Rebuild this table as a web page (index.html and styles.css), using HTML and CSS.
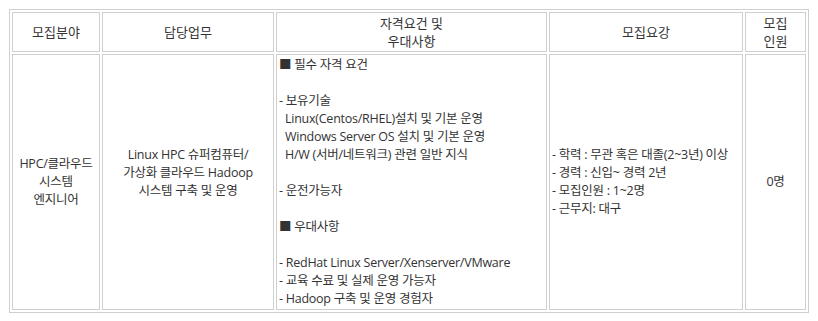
FILE: index.html
```html
<!DOCTYPE html>
<html lang="ko">
<head>
<meta charset="utf-8">
<title>모집요강</title>
<link rel="stylesheet" href="styles.css">
</head>
<body>
<table class="recruit">
  <colgroup>
    <col class="c1">
    <col class="c2">
    <col class="c3">
    <col class="c4">
    <col class="c5">
  </colgroup>
  <thead>
    <tr>
      <th>모집분야</th>
      <th>담당업무</th>
      <th>자격요건 및<br>우대사항</th>
      <th>모집요강</th>
      <th>모집<br>인원</th>
    </tr>
  </thead>
  <tbody>
    <tr>
      <td class="center">HPC/클라우드<br>시스템<br>엔지니어</td>
      <td class="center">Linux HPC 슈퍼컴퓨터/<br>가상화 클라우드 Hadoop<br>시스템 구축 및 운영<br>&nbsp;</td>
      <td class="left">■ 필수 자격 요건<br><br>- 보유기술<br>&nbsp;&nbsp;Linux(Centos/RHEL)설치 및 기본 운영<br>&nbsp;&nbsp;Windows Server OS 설치 및 기본 운영<br>&nbsp;&nbsp;H/W (서버/네트워크) 관련 일반 지식<br><br>- 운전가능자<br><br>■ 우대사항<br><br>- RedHat Linux Server/Xenserver/VMware<br>- 교육 수료 및 실제 운영 가능자<br>- Hadoop 구축 및 운영 경험자</td>
      <td class="left">- 학력 : 무관 혹은 대졸(2~3년) 이상<br>- 경력 : 신입~ 경력 2년<br>- 모집인원 : 1~2명<br>- 근무지: 대구</td>
      <td class="center">0명</td>
    </tr>
  </tbody>
</table>
</body>
</html>
```

FILE: styles.css
```css
html, body {
  margin: 0;
  padding: 0;
  background: #ffffff;
}

body {
  font-family: "Open Sans", "Noto Sans CJK KR", sans-serif;
  color: #333333;
}

.recruit {
  margin: 9px 0 0 9px;
  width: 799px;
  table-layout: fixed;
  border: 1px solid #cfcfcf;
  border-collapse: separate;
  border-spacing: 2px;
}

.c1 { width: 88px; }
.c2 { width: 172px; }
.c3 { width: 271px; }
.c4 { width: 194px; }
.c5 { width: 61px; }

.recruit th,
.recruit td {
  border: 1px solid #cfcfcf;
  padding: 1px 2px;
  line-height: 18px;
  vertical-align: middle;
  box-sizing: border-box;
}

.recruit th {
  font-size: 13px;
  font-weight: normal;
  color: #333333;
  text-align: center;
}

.recruit td {
  font-size: 12.5px;
  letter-spacing: -0.25px;
}

.center { text-align: center; }
.left { text-align: left; }
```
